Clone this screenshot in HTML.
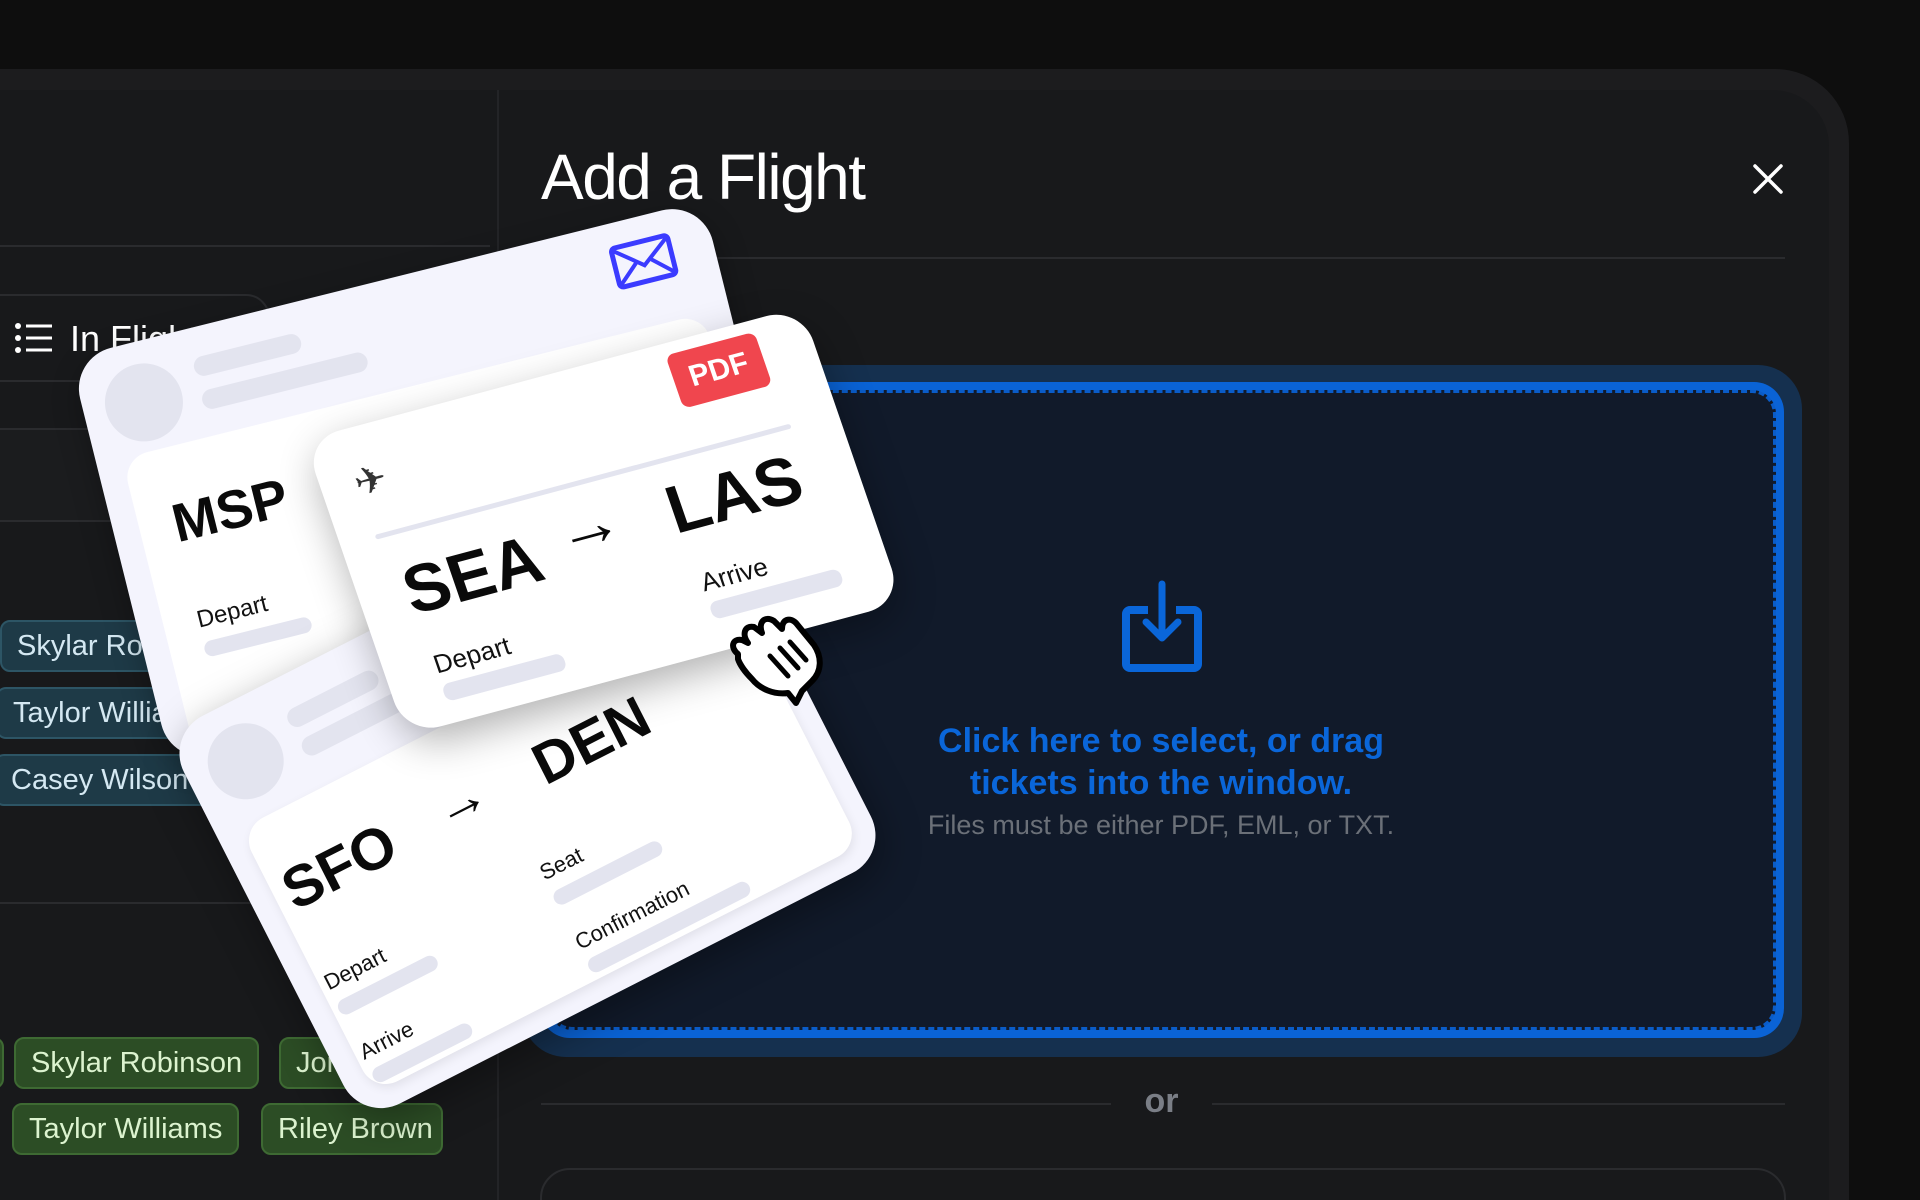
<!DOCTYPE html>
<html><head><meta charset="utf-8"><style>
*{margin:0;padding:0;box-sizing:border-box}
html,body{width:1920px;height:1200px;overflow:hidden}
body{background:#0e0e0e;font-family:"Liberation Sans",sans-serif;position:relative}
.abs{position:absolute}
.outer{left:0;top:69px;width:1849px;height:1131px;background:#1c1c1e;border-top-right-radius:74px}
.inner{left:0;top:90px;width:1829px;height:1110px;background:#18191b;border-top-right-radius:56px}
.hl{height:2px;background:#2a2b2e}
.chip{position:absolute;height:52px;border-radius:10px;font-size:29px;line-height:48px;padding:0 15px;white-space:nowrap;overflow:hidden}
.teal{background:#1e3a47;border:2px solid #2d5565;color:#d4e8f2}
.green{background:#2c4d25;border:2px solid #3e6a33;color:#dcf3cf}
.card{position:absolute;transform-origin:0 0;overflow:hidden}
.bar{position:absolute;height:16px;border-radius:8px;background:#e3e4ef}
.lbl{position:absolute;font-size:26px;color:#111;white-space:nowrap}
.big{position:absolute;font-weight:bold;color:#0a0a0a;white-space:nowrap;line-height:1}
</style></head><body>
<div class="abs outer"></div>
<div class="abs inner"></div>
<div class="abs" style="left:497px;top:90px;width:2px;height:1110px;background:#232427"></div>
<div class="abs hl" style="left:0;top:245px;width:490px"></div>
<div class="abs hl" style="left:0;top:428px;width:490px"></div>
<div class="abs" style="left:0;top:430px;width:490px;height:90px;background:#1b1c1e"></div>
<div class="abs hl" style="left:0;top:520px;width:490px"></div>
<div class="abs hl" style="left:0;top:902px;width:490px"></div>
<div class="abs" style="left:-30px;top:294px;width:300px;height:88px;border:2px solid #2a2b2e;border-radius:24px"></div>
<svg class="abs" style="left:14px;top:322px" width="40" height="32" viewBox="0 0 40 32"><g fill="#fff"><circle cx="4" cy="4" r="3"/><circle cx="4" cy="16" r="3"/><circle cx="4" cy="28" r="3"/><rect x="12" y="2.5" width="26" height="3"/><rect x="12" y="14.5" width="26" height="3"/><rect x="12" y="26.5" width="26" height="3"/></g></svg>
<div class="abs" style="left:70px;top:318px;font-size:36px;color:#fff">In Flight</div>
<div class="chip teal" style="left:0;top:620px;width:200px">Skylar Robinson</div>
<div class="chip teal" style="left:-4px;top:687px;width:220px">Taylor Williams</div>
<div class="chip teal" style="left:-6px;top:754px;width:220px">Casey Wilson</div>
<div class="chip green" style="left:-40px;top:1037px;width:44px"></div>
<div class="chip green" style="left:14px;top:1037px">Skylar Robinson</div>
<div class="chip green" style="left:279px;top:1037px;width:120px">Jordan</div>
<div class="chip green" style="left:12px;top:1103px">Taylor Williams</div>
<div class="chip green" style="left:261px;top:1103px;width:182px">Riley Brown</div>
<div class="abs" style="left:541px;top:140px;font-size:64px;color:#fff;letter-spacing:-1.5px">Add a Flight</div>
<svg class="abs" style="left:1752px;top:163px" width="32" height="32" viewBox="0 0 32 32"><path d="M3 3L29 29M29 3L3 29" stroke="#fff" stroke-width="3.5" stroke-linecap="round"/></svg>
<div class="abs hl" style="left:541px;top:257px;width:1244px"></div>
<div class="abs" style="left:522px;top:365px;width:1280px;height:692px;background:#15304f;border-radius:44px"></div>
<div class="abs" style="left:540px;top:382px;width:1244px;height:656px;background:#0a63d6;border-radius:30px"></div>
<div class="abs" style="left:548px;top:390px;width:1228px;height:640px;background:#111a2a;border-radius:24px;border:3px dashed #0a5cc8"></div>
<svg class="abs" style="left:1120px;top:580px" width="84" height="94" viewBox="0 0 84 94"><path d="M28 30H10a4 4 0 0 0-4 4v50a4 4 0 0 0 4 4h64a4 4 0 0 0 4-4V34a4 4 0 0 0-4-4H56" fill="none" stroke="#0a66d9" stroke-width="8" stroke-linejoin="round"/><path d="M42 4v52M26 42l16 16 16-16" fill="none" stroke="#0a66d9" stroke-width="7" stroke-linecap="round" stroke-linejoin="round"/></svg>
<div class="abs" style="left:760px;top:720px;width:802px;text-align:center;font-size:34px;line-height:42px;font-weight:bold;color:#0a66d9">Click here to select, or drag<br>tickets into the window.</div>
<div class="abs" style="left:760px;top:810px;width:802px;text-align:center;font-size:27px;color:#6b7078">Files must be either PDF, EML, or TXT.</div>
<div class="abs hl" style="left:541px;top:1103px;width:570px"></div>
<div class="abs hl" style="left:1212px;top:1103px;width:573px"></div>
<div class="abs" style="left:1111px;top:1082px;width:101px;text-align:center;font-size:34px;font-weight:bold;color:#7a7e86">or</div>
<div class="abs" style="left:540px;top:1168px;width:1246px;height:80px;border:2px solid #2a2b2e;border-radius:30px"></div>

<div class="card" style="left:70px;top:358px;width:652px;height:420px;background:#f4f4fd;border-radius:42px;transform:rotate(-14deg);box-shadow:0 10px 30px rgba(0,0,0,.3)">
  <svg style="position:absolute;left:548px;top:22px" width="64" height="46" viewBox="0 0 64 46"><rect x="3" y="3" width="58" height="40" rx="4" fill="none" stroke="#3b3bff" stroke-width="5"/><path d="M4 5l28 22 28-22M4 41l20-18M60 41L40 23" fill="none" stroke="#3b3bff" stroke-width="4"/></svg>
  <div style="position:absolute;left:22px;top:22px;width:78px;height:78px;border-radius:50%;background:#e3e4ef"></div>
  <div class="bar" style="left:118px;top:30px;width:110px;height:20px;border-radius:10px"></div>
  <div class="bar" style="left:118px;top:64px;width:170px;height:20px;border-radius:10px"></div>
  <div style="position:absolute;left:26px;top:110px;width:600px;height:420px;background:#fff;border-radius:26px"></div>
  <div class="big" style="left:60px;top:160px;font-size:54px">MSP</div>
  <div class="lbl" style="left:60px;top:272px;font-size:24px">Depart</div>
  <div class="bar" style="left:60px;top:308px;width:110px"></div>
</div>
<div class="card" style="left:165px;top:735px;width:592px;height:435px;background:#f4f4fd;border-radius:42px;transform:rotate(-27deg);box-shadow:0 12px 40px rgba(0,0,0,.35)">
  <div style="position:absolute;left:22px;top:22px;width:76px;height:76px;border-radius:50%;background:#e3e4ef"></div>
  <div class="bar" style="left:116px;top:34px;width:100px;height:20px;border-radius:10px"></div>
  <div class="bar" style="left:116px;top:66px;width:150px;height:20px;border-radius:10px"></div>
  <div style="position:absolute;left:24px;top:118px;width:546px;height:296px;background:#fff;border-radius:26px;box-shadow:0 4px 10px rgba(0,0,0,.08)"></div>
  <div class="big" style="left:36px;top:168px;font-size:58px">SFO</div>
  <div class="big" style="left:206px;top:166px;font-size:54px;font-weight:normal">→</div>
  <div class="big" style="left:316px;top:170px;font-size:58px">DEN</div>
  <div class="lbl" style="left:30px;top:282px;font-size:22px">Depart</div>
  <div class="bar" style="left:30px;top:316px;width:110px"></div>
  <div class="lbl" style="left:30px;top:360px;font-size:22px">Arrive</div>
  <div class="bar" style="left:30px;top:392px;width:110px"></div>
  <div class="lbl" style="left:272px;top:282px;font-size:22px">Seat</div>
  <div class="bar" style="left:272px;top:316px;width:120px"></div>
  <div class="lbl" style="left:272px;top:360px;font-size:22px">Confirmation</div>
  <div class="bar" style="left:272px;top:392px;width:180px"></div>
</div>
<div class="card" style="left:304px;top:440px;width:515px;height:312px;background:#fff;border-radius:36px;transform:rotate(-15deg) skewX(4deg);box-shadow:0 14px 40px rgba(0,0,0,.3)">
  <div style="position:absolute;left:370px;top:12px;width:92px;height:56px;background:#f0464e;border-radius:8px;color:#fff;font-weight:bold;font-size:30px;line-height:56px;text-align:center">PDF</div>
  <div style="position:absolute;left:34px;top:34px;font-size:38px;color:#333">✈</div>
  <div style="position:absolute;left:36px;top:110px;width:430px;height:5px;background:#e3e4ef;border-radius:3px"></div>
  <div class="big" style="left:46px;top:140px;font-size:68px">SEA</div>
  <div class="big" style="left:208px;top:122px;font-size:66px;font-weight:normal">→</div>
  <div class="big" style="left:322px;top:130px;font-size:68px">LAS</div>
  <div class="lbl" style="left:50px;top:236px">Depart</div>
  <div class="bar" style="left:50px;top:272px;width:125px;height:18px"></div>
  <div class="lbl" style="left:330px;top:226px">Arrive</div>
  <div class="bar" style="left:330px;top:262px;width:135px;height:18px"></div>
</div>
<svg class="abs" style="left:718px;top:592px" width="116" height="116" viewBox="0 0 116 116"><path d="M20 62c-8-6-6-16 4-14l6 3c-6-8-4-18 6-16l8 6c-4-10 2-18 12-12l8 8c0-10 8-12 14-6l18 22c8 12 8 26-2 36l-10 10-6 12-8-10c-14 2-28-4-36-14-6-6-12-14-14-20z" fill="#fff" stroke="#000" stroke-width="6" stroke-linejoin="round"/><path d="M52 64l18 20M62 56l18 20M72 50l16 18" stroke="#000" stroke-width="5" stroke-linecap="round"/></svg>
</body></html>
